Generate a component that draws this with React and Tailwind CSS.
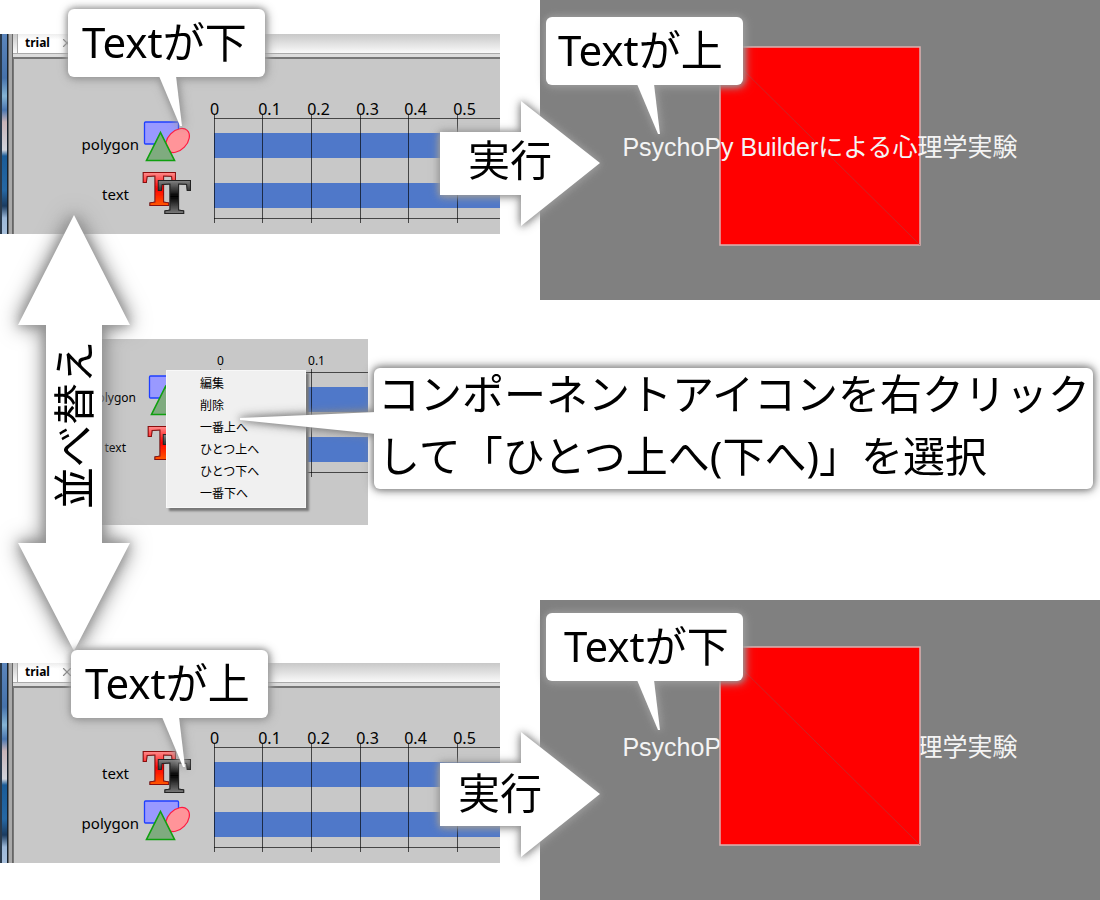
import React from 'react';
import { X } from 'lucide-react';

const TICKS = ['0', '0.1', '0.2', '0.3', '0.4', '0.5'];

const MENU_ITEMS = ['編集', '削除', '一番上へ', 'ひとつ上へ', 'ひとつ下へ', '一番下へ'];

function PolygonIcon() {
  return (
    <svg width="48" height="48" viewBox="0 0 48 48" className="shrink-0">
      <rect x="1.5" y="2" width="34" height="22" rx="1" fill="#9999ff" stroke="#1f3fff" strokeWidth="1.3" />
      <ellipse cx="34.5" cy="20.5" rx="14" ry="9.5" transform="rotate(-46 34.5 20.5)" fill="#ff9499" stroke="#ff1a40" strokeWidth="1.2" />
      <path d="M17.5 12.5 L31.5 40.5 H3.5 Z" fill="#7fab7f" stroke="#0f9f0f" strokeWidth="1.6" />
    </svg>
  );
}

function TextIcon() {
  return (
    <svg width="48" height="48" viewBox="0 0 48 48" className="shrink-0 overflow-visible font-['Liberation_Serif',serif] font-bold">
      <defs>
        <linearGradient id="redFill" x1="0" y1="0" x2="0" y2="1">
          <stop offset="0.2" stopColor="#ff9090" />
          <stop offset="0.5" stopColor="#ff0000" />
          <stop offset="0.8" stopColor="#ff5500" />
        </linearGradient>
        <linearGradient id="blackFill" x1="0" y1="0" x2="0" y2="1">
          <stop offset="0.2" stopColor="#888888" />
          <stop offset="0.5" stopColor="#000000" />
          <stop offset="0.8" stopColor="#777777" />
        </linearGradient>
        <filter id="iconShadow" x="-20%" y="-20%" width="140%" height="140%">
          <feDropShadow dx="0" dy="0" stdDeviation="0.5" floodColor="#333333" />
        </filter>
      </defs>
      <g fontSize="49" strokeWidth="2" paintOrder="stroke" filter="url(#iconShadow)">
        <text x="0" y="35" fill="url(#redFill)" stroke="#8a1010">T</text>
        <text x="15" y="43" fill="url(#blackFill)" stroke="#222222">T</text>
      </g>
    </svg>
  );
}

const COMPONENTS = {
  polygon: { Icon: PolygonIcon, pad: 'pr-1' },
  text: { Icon: TextIcon, pad: 'pr-3.5' },
};

function ComponentList({ order, className }) {
  return (
    <ul className={className}>
      {order.map((name) => {
        const { Icon, pad } = COMPONENTS[name];
        return (
          <li key={name} className="flex h-[50px] items-center justify-end">
            <span className={pad}>{name}</span>
            <Icon />
          </li>
        );
      })}
    </ul>
  );
}

function Timeline({ count, step, start, fontSize }) {
  return (
    <svg height="132" className="min-w-0 flex-1">
      {[37, 87].map((y) => (
        <rect key={y} x={start} y={y} width="100%" height="25" fill="#4f78c9" />
      ))}
      <path d={`M${start} 22.5 H2000 M${start} 122.5 H2000`} stroke="#000000" strokeOpacity="0.65" />
      {TICKS.slice(0, count).map((tick, i) => {
        const x = Math.floor(i * step) + start + 0.5;
        return (
          <g key={tick}>
            <path d={`M${x} 19 V127`} stroke="#000000" strokeOpacity="0.65" />
            <text x={i === 0 ? x : x + Math.round(fontSize * 0.43)} y={fontSize > 14 ? 19 : 15} fontSize={fontSize} textAnchor="middle">
              {tick}
            </text>
          </g>
        );
      })}
    </svg>
  );
}

function BuilderWindow({ order }) {
  return (
    <div className="flex h-[200px] w-[500px] shrink-0 overflow-hidden bg-[#c8c8c8] font-['Noto_Sans',sans-serif] text-[15px]">
      <div className="w-2 border-r border-l-2 border-r-[#14202c] border-l-[#2a3a4c] bg-[linear-gradient(to_bottom,#5b85bb_0%,#4672ab_22%,#86b4d4_31%,#4a76b0_38%,#c8b4b8_44%,#d0d4dc_58%,#1a5c98_61%,#2668a4_78%,#1c3c60_86%,#9cb8d8_92%,#a8c0dc_100%)]" />
      <div className="w-[5px] border-x border-[#666666] bg-[#aaaaaa]" />
      <div className="flex min-w-0 flex-1 flex-col">
        <div className="flex h-5 items-stretch border-b border-[#aaaaaa] bg-linear-to-b from-[#c8c8c8] to-[#fafafa]">
          <button type="button" className="ml-1 flex items-center gap-2.5 border-l border-[#aaaaaa] bg-linear-to-b from-[#eeeeee] to-white to-30% px-[7px] pb-0.5 text-xs font-bold">
            trial
            <X size={14} className="text-[#888888]" />
          </button>
        </div>
        <div className="h-[3px] bg-[#dddddd]" />
        <div className="flex flex-1 items-start border-t-2 border-l border-[#777777]">
          <ComponentList order={order} className="w-[177px] pt-[60px]" />
          <div className="flex min-w-0 flex-1 pt-[37px] pl-[17px]">
            <Timeline count={6} step={48.7} start={6} fontSize={16} />
          </div>
        </div>
      </div>
    </div>
  );
}

function ContextMenu({ className }) {
  return (
    <ul className={`${className} w-[140px] border border-[#f8f8f8] bg-[#f0f0f0] py-0.5 shadow-[3px_3px_2px_#777777]`}>
      {MENU_ITEMS.map((item) => (
        <li key={item}>
          <button type="button" className="block h-[22px] w-full pl-[33px] text-left text-xs">{item}</button>
        </li>
      ))}
    </ul>
  );
}

function MenuWindow() {
  return (
    <div className="relative ml-20 flex h-[186px] w-72 items-start bg-[#c8c8c8] font-['Noto_Sans','Noto_Sans_CJK_JP',sans-serif] text-[12px]">
      <ComponentList order={['polygon', 'text']} className="w-[116px] pt-[34px] [&>li]:gap-2" />
      <div className="flex min-w-0 flex-1 pt-[11px] pl-[18px]">
        <Timeline count={2} step={91} start={6} fontSize={12} />
      </div>
      <ContextMenu className="absolute top-[31px] left-[86px]" />
    </div>
  );
}

function Stimulus({ squareOnTop }) {
  return (
    <div className="relative flex h-[300px] flex-1 items-center justify-center overflow-hidden bg-[#808080]">
      <svg width="202" height="200" className={squareOnTop ? 'z-10 mb-2' : 'mb-2'}>
        <rect x="1" y="1" width="200" height="198" fill="#ff0000" stroke="#ddb0b0" strokeWidth="1.5" />
        <path d="M1 1 L201 199" stroke="#a84040" strokeWidth="0.6" />
      </svg>
      <p className="absolute inset-x-0 top-[131px] text-center font-['Liberation_Sans','Noto_Sans_CJK_JP',sans-serif] text-[25px] leading-8 whitespace-nowrap text-[#f4f4f4]">
        PsychoPy Builderによる心理学実験
      </p>
    </div>
  );
}

function Callout({ className, textClass, children }) {
  return (
    <div className={`absolute z-20 [filter:drop-shadow(0_0_3px_#999999)_drop-shadow(1px_1px_4px_#999999)] ${className}`}>
      <div className={`flex h-[68px] w-[197px] items-center rounded-md bg-white pb-1 text-[42px] whitespace-nowrap ${textClass}`}>
        {children}
      </div>
      <svg width="197" height="50" className="absolute top-[67px] left-0">
        <path d="M91 0 H108 L114 50 H112 Z" fill="white" />
      </svg>
    </div>
  );
}

function RunArrow({ className, textClass }) {
  return (
    <div className={`absolute z-20 flex h-[126px] w-[160px] items-center [filter:drop-shadow(0_0_3px_#999999)_drop-shadow(0_1px_4px_#999999)] ${className}`}>
      <svg viewBox="0 0 160 126" className="absolute inset-0">
        <path d="M0 31 H81 V0 L160 62 L81 125 V94 H0 Z" fill="white" />
      </svg>
      <span className={`relative text-[42px] leading-none whitespace-nowrap ${textClass}`}>実行</span>
    </div>
  );
}

function SwapArrow() {
  return (
    <div className="absolute top-[215px] left-[18px] z-10 flex h-[436px] w-28 items-center justify-center pb-4 [filter:drop-shadow(0_0_5px_#999999)_drop-shadow(0_0_10px_#777777)]">
      <svg viewBox="0 0 112 436" className="absolute inset-0">
        <path d="M56 0 L112 110 H84 V328 H112 L56 436 L0 328 H28 V110 H0 Z" fill="white" />
      </svg>
      <span className="relative -rotate-90 text-[42px] leading-none whitespace-nowrap">並べ替え</span>
    </div>
  );
}

function MenuCallout() {
  return (
    <div className="absolute top-[368px] left-[374px] z-20 [filter:drop-shadow(0_0_3px_#888888)_drop-shadow(0_0_5px_#888888)]">
      <div className="flex h-[121px] w-[719px] items-center rounded-md bg-white pb-2 pl-1">
        <p className="text-[42px] leading-[62px] whitespace-nowrap">
          コンポーネントアイコンを右クリック
          <br />
          して「ひとつ上へ(下へ)」を選択
        </p>
      </div>
      <svg width="136" height="24" className="absolute top-[44px] -left-[134px]">
        <path d="M0 6 L136 0 V22 L0 8 Z" fill="white" />
      </svg>
    </div>
  );
}

export default function App() {
  return (
    <main className="relative min-h-screen overflow-hidden bg-white font-['Noto_Sans','Noto_Sans_CJK_JP',sans-serif] text-black">
      <section className="flex gap-10">
        <div className="pt-[34px]">
          <BuilderWindow order={['polygon', 'text']} />
        </div>
        <Stimulus />
      </section>

      <section className="h-[300px] pt-[39px]">
        <MenuWindow />
      </section>

      <section className="flex gap-10">
        <div className="pt-[63px]">
          <BuilderWindow order={['text', 'polygon']} />
        </div>
        <Stimulus squareOnTop />
      </section>

      {/* Annotations over the windows */}
      <SwapArrow />
      <Callout className="top-[9px] left-[68px]" textClass="pl-3.5">Textが下</Callout>
      <Callout className="top-[17px] left-[546px]" textClass="pl-3">Textが上</Callout>
      <RunArrow className="top-[101px] left-[440px]" textClass="pb-2 pl-7" />
      <MenuCallout />
      <Callout className="top-[650px] left-[71px]" textClass="pl-3.5">Textが上</Callout>
      <Callout className="top-[613px] left-[546px]" textClass="pl-[18px]">Textが下</Callout>
      <RunArrow className="top-[732px] left-[440px]" textClass="pb-1 pl-[18px]" />
    </main>
  );
}
